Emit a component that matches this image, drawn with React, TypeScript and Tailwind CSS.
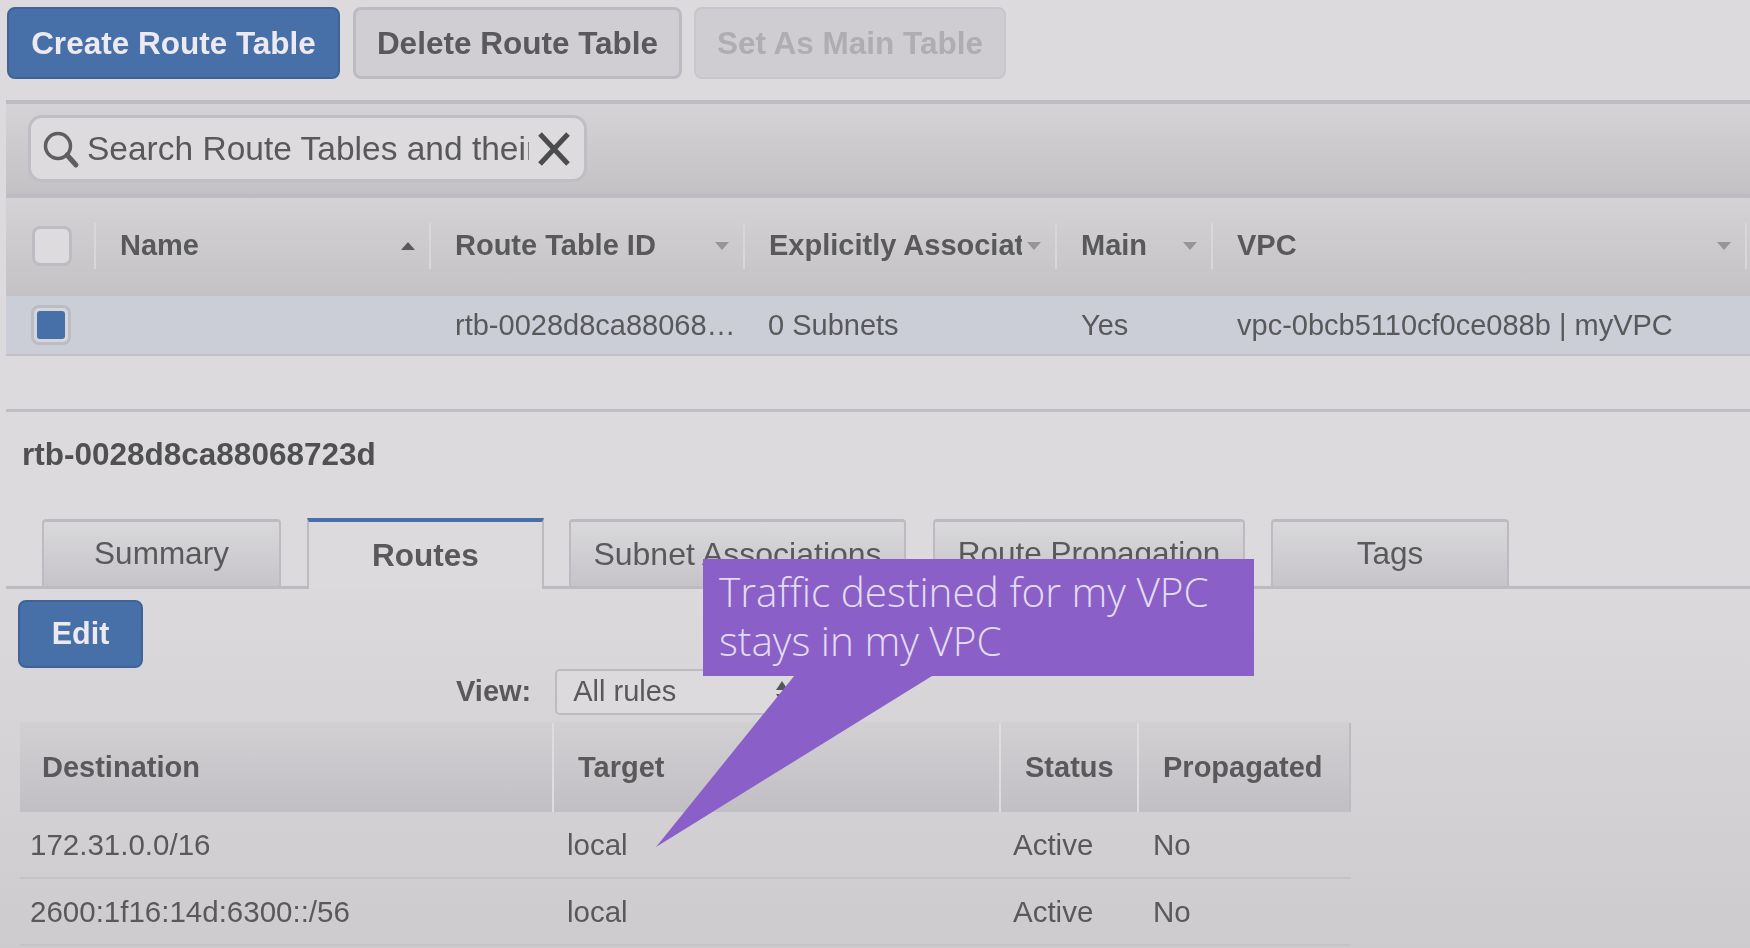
const font = { fontFamily: '"Liberation Sans", Arial, sans-serif' };

function Tri({ up = false, dark = false }: { up?: boolean; dark?: boolean }) {
  return (
    <svg width="16" height="10" viewBox="0 0 16 10" className="shrink-0">
      <polygon points={up ? "8,1 15,9 1,9" : "1,1 15,1 8,9"} fill={dark ? "#5a5a5c" : "#96959a"} />
    </svg>
  );
}

function HeadCell({ label, up, dark, clip }: { label: string; up?: boolean; dark?: boolean; clip?: boolean }) {
  return (
    <div className="flex items-center">
      <div className="flex h-[46px] flex-1 items-center justify-between border-r-2 border-[#d8d7da] pl-[24px] pr-[13px] min-w-0">
        <span className={clip ? "w-[253px] overflow-hidden whitespace-nowrap" : "whitespace-nowrap"}>{label}</span>
        <Tri up={up} dark={dark} />
      </div>
    </div>
  );
}

function Tab({ label, w, mr, size = "text-[31.5px]" }: { label: string; w: string; mr: string; size?: string }) {
  return (
    <div className={`${w} ${mr} ${size} flex h-[67px] items-center justify-center rounded-t-[4px] border-x-2 border-t-[3px] border-[#bdbbc1] bg-gradient-to-b from-[#d9d8db] to-[#c6c4c8]`}>
      {label}
    </div>
  );
}

function RouteRow({ dest }: { dest: string }) {
  return (
    <div className="grid h-[67px] grid-cols-[534px_447px_138px_212px] items-center border-b-2 border-[#c4c3c7] pt-[2px] text-[29.5px]">
      <div className="pl-[10px]">{dest}</div>
      <div className="pl-[13px]">local</div>
      <div className="pl-[12px]">Active</div>
      <div className="pl-[14px]">No</div>
    </div>
  );
}

export default function App() {
  return (
    <div style={font} className="relative h-[948px] w-[1750px] overflow-hidden bg-gradient-to-b from-[#dcdadd] from-60% to-[#cdcbce] text-[#59595b]">
      <div className="blur-[0.7px]">
        {/* Action buttons */}
        <div className="flex h-[100px] items-start pt-[7px] pl-[7px] text-[31.5px] font-bold">
          <div className="flex h-[72px] w-[333px] items-center justify-center rounded-[8px] border-2 border-[#3f6396] bg-[#4870a8] pt-[2px] text-[#eceaf0]">Create Route Table</div>
          <div className="ml-[13px] flex h-[72px] w-[329px] items-center justify-center rounded-[8px] border-[3px] border-[#bdbbc1] bg-[#d0ced2] pt-[2px]">Delete Route Table</div>
          <div className="ml-[12px] flex h-[72px] w-[312px] items-center justify-center rounded-[8px] border-2 border-[#c8c6ca] bg-[#cfcdd1] pt-[2px] text-[#aeadb1]">Set As Main Table</div>
        </div>

        {/* Search toolbar */}
        <div className="ml-[6px] flex h-[98px] items-start border-y-4 border-[#bebcc2] bg-gradient-to-b from-[#d5d3d6] to-[#c3c1c4] pl-[22px] pt-[11px]">
          <div className="flex h-[67px] w-[559px] items-center rounded-[14px] border-[3px] border-[#c0bec4] bg-[#dddbde] pl-[10px]">
            <svg width="40" height="40" viewBox="0 0 40 40" className="shrink-0" fill="none" stroke="#5f5f62" strokeWidth="3.5" strokeLinecap="round">
              <circle cx="17" cy="17" r="12.5" />
              <path d="M26 26 L35 36" strokeWidth="5" />
            </svg>
            <span className="ml-[6px] w-[442px] overflow-hidden whitespace-nowrap text-[33.5px] leading-none">Search Route Tables and their</span>
            <svg width="36" height="36" viewBox="0 0 36 36" className="ml-[7px] shrink-0" stroke="#4c4c4e" strokeWidth="5">
              <path d="M4 3 L32 33 M32 3 L4 33" />
            </svg>
          </div>
        </div>

        {/* Route tables list */}
        <div className="ml-[6px] grid h-[98px] grid-cols-[90px_335px_314px_312px_156px_534px_1fr] bg-gradient-to-b from-[#d4d2d5] to-[#c4c2c5] pb-[2px] text-[29px] font-bold">
          <div className="flex items-center">
            <div className="flex h-[46px] flex-1 items-center border-r-2 border-[#d8d7da] pl-[26px]">
              <div className="h-[40px] w-[40px] rounded-[8px] border-[3px] border-[#bebcc2] bg-[#dddbde]" />
            </div>
          </div>
          <HeadCell label="Name" up dark />
          <HeadCell label="Route Table ID" />
          <HeadCell label="Explicitly Associated" clip />
          <HeadCell label="Main" />
          <HeadCell label="VPC" />
          <div />
        </div>
        <div className="ml-[6px] grid h-[60px] grid-cols-[90px_335px_314px_312px_156px_1fr] items-center border-b-2 border-[#c2c1c7] bg-[#cbced7] pt-[2px] text-[29px]">
          <div className="-mt-[2px] pl-[25px]">
            <div className="flex h-[40px] w-[40px] items-center justify-center rounded-[8px] border-[3px] border-[#bcbcc4] bg-[#d5d6dc]">
              <div className="h-[28px] w-[28px] rounded-[3px] bg-[#4870a8]" />
            </div>
          </div>
          <div />
          <div className="whitespace-nowrap pl-[24px]">rtb-0028d8ca88068…</div>
          <div className="pl-[23px]">0 Subnets</div>
          <div className="pl-[24px]">Yes</div>
          <div className="whitespace-nowrap pl-[24px]">vpc-0bcb5110cf0ce088b | myVPC</div>
        </div>

        {/* Detail pane */}
        <div className="ml-[6px] mt-[53px] border-t-[3px] border-[#c0bec4]">
          <div className="flex h-[82px] items-center pl-[16px] pt-[4px] text-[31.5px] font-bold text-[#505052]">rtb-0028d8ca88068723d</div>
          <div className="mt-[26px] flex h-[69px] items-end border-b-[3px] border-[#bdbbc1] pl-[36px]">
            <Tab label="Summary" w="w-[239px]" mr="mr-[26px]" />
            <div className="-mb-[3px] mr-[25px] flex h-[71px] w-[237px] items-center justify-center border-x-2 border-t-4 border-x-[#bdbbc1] border-t-[#4870a8] bg-[#dcdadd] text-[31.5px] font-bold">Routes</div>
            <Tab label="Subnet Associations" w="w-[337px]" mr="mr-[27px]" size="text-[32px]" />
            <Tab label="Route Propagation" w="w-[312px]" mr="mr-[26px]" />
            <Tab label="Tags" w="w-[238px]" mr="mr-0" />
          </div>
        </div>

        <div className="ml-[18px] mt-[11px] flex h-[68px] w-[125px] items-center justify-center rounded-[8px] border-2 border-[#3f6396] bg-[#4870a8] text-[30.5px] font-bold text-[#eceaf0]">Edit</div>

        <div className="mt-[1px] flex h-[46px] items-center pl-[456px] text-[29px]">
          <span className="font-bold">View:</span>
          <div className="ml-[24px] flex h-[46px] w-[245px] items-center justify-between rounded-[5px] border-2 border-[#bdbbc1] bg-[#dcdadd] pl-[16px] pr-[8px]">
            <span>All rules</span>
            <svg width="16" height="26" viewBox="0 0 16 26"><polygon points="8,2 14,11 2,11" fill="#555" /><polygon points="2,15 14,15 8,24" fill="#555" /></svg>
          </div>
        </div>

        {/* Routes table */}
        <div className="ml-[20px] mt-[7px] w-[1331px]">
          <div className="grid h-[90px] grid-cols-[534px_447px_138px_212px] items-stretch bg-gradient-to-b from-[#d2d0d3] to-[#c1bfc3] pt-[1px] text-[29px] font-bold">
            <div className="flex items-center border-r-2 border-[#dedcdf] pl-[22px]">Destination</div>
            <div className="flex items-center border-r-2 border-[#dedcdf] pl-[24px]">Target</div>
            <div className="flex items-center border-r-2 border-[#dedcdf] pl-[24px]">Status</div>
            <div className="flex items-center border-r-2 border-[#bdbbc1] pl-[24px]">Propagated</div>
          </div>
          <RouteRow dest="172.31.0.0/16" />
          <RouteRow dest="2600:1f16:14d:6300::/56" />
        </div>
      </div>

      {/* Callout */}
      <div style={{ fontFamily: '"Open Sans", sans-serif' }} className="absolute left-[703px] top-[559px] h-[117px] w-[551px] bg-[#8a60c8] px-[16px] pt-[8px] text-[40.5px] font-light leading-[49px] text-[#e2dcef]">
        Traffic destined for my VPC
        <br />
        stays in my VPC
      </div>
      <svg className="absolute left-[650px] top-[670px]" width="290" height="182" viewBox="0 0 290 182">
        <polygon points="149,0 282,6 6,177" fill="#8a60c8" />
      </svg>
    </div>
  );
}
